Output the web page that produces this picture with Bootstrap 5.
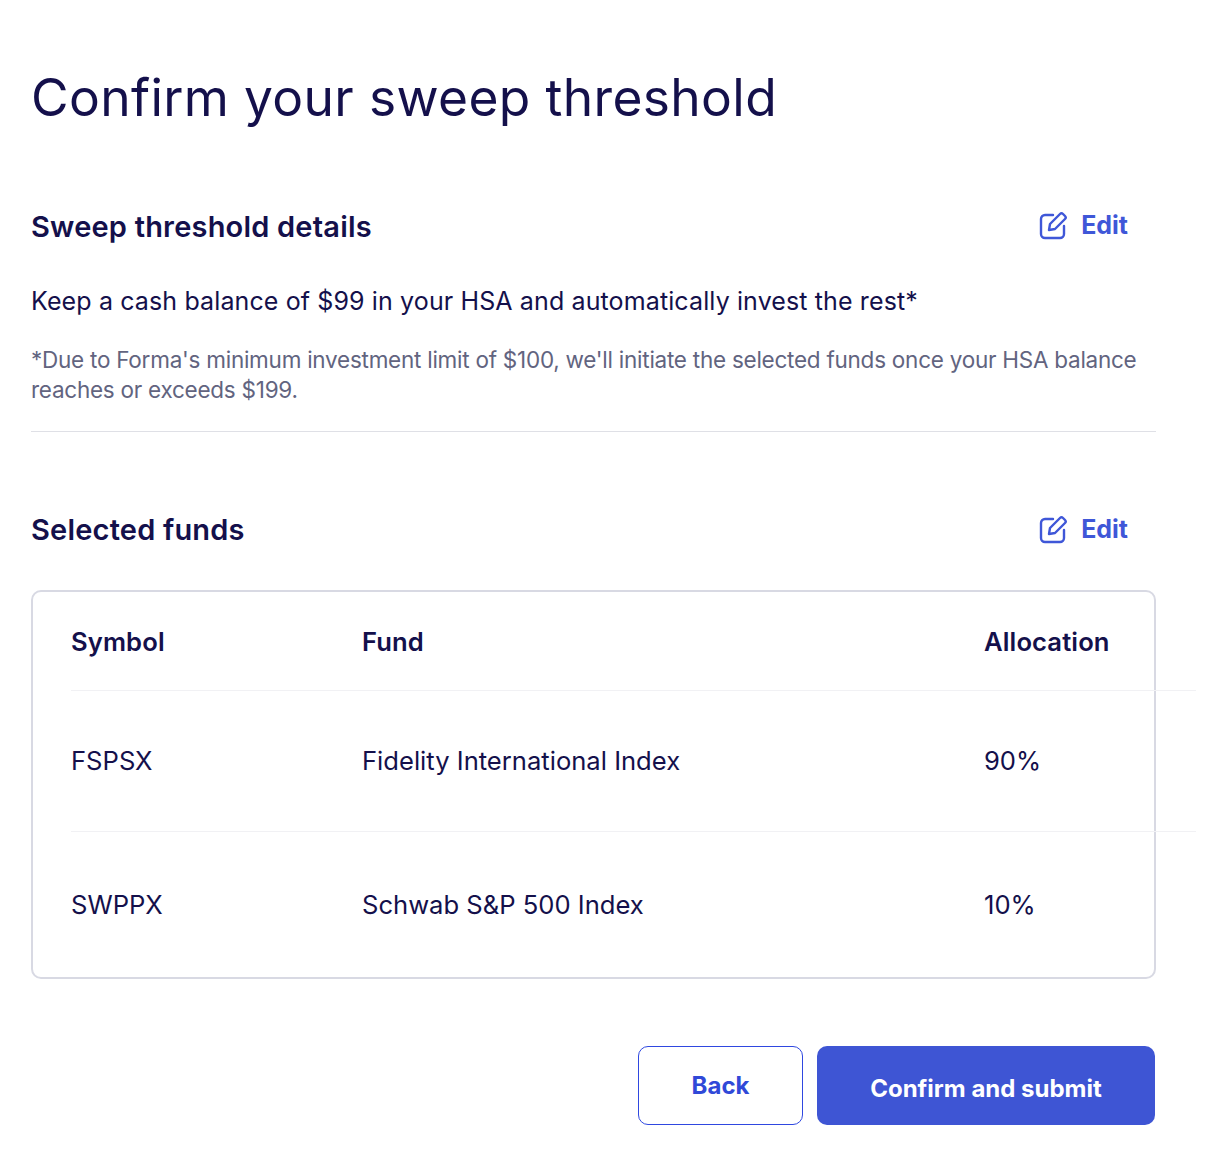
<!DOCTYPE html>
<html lang="en"><head><meta charset="utf-8">
<link href="https://cdn.jsdelivr.net/npm/bootstrap@5.3.0/dist/css/bootstrap.min.css" rel="stylesheet">
<style>
body{background:#fff;color:#14104b;font-family:Inter,"Liberation Sans",sans-serif;overflow-x:hidden}
.shell{width:1125px;margin-left:31px;padding-top:67px}
.title{font-size:51.5px;line-height:60px;font-weight:400;margin:0 0 81px;letter-spacing:.35px}
.sec-head{font-size:29px;line-height:34px;font-weight:600;margin:0;letter-spacing:.2px}
.edit-link{color:#3f57d8;font-weight:700;font-size:25px;text-decoration:none;margin:0 28px 2px 0;gap:13px;height:35.5px}
.lead-txt{font-size:25px;line-height:32px;margin:39px 0 28px;letter-spacing:.12px}
.note{font-size:22.5px;line-height:30px;color:#62647f;margin:0;padding-bottom:26px;border-bottom:1px solid #dfe0e6;letter-spacing:-.25px}
.fund-box{border:2px solid #d8d9e3;border-radius:10px;height:389px;padding:0 0 0 38px;margin-top:41px}
.fund-row{display:flex;align-items:center;font-size:25.6px;border-bottom:1px solid #f1f1f4;margin-right:-42px}
.fund-row.last{border-bottom:0}
.fund-head{letter-spacing:.12px;padding-top:2px;height:99px}
.row-a{height:141px}.row-b{height:146px}
.c1{width:291px}.c2{width:622px}
.btn-back{width:165px;height:79px;border:1.5px solid #2f48e0;color:#3049d8;border-radius:10px;background:#fff;font-weight:700;font-size:24px;padding-bottom:5px}
.btn-go{width:338px;height:79px;background:#3e55d4;color:#fff;border:0;border-radius:10px;font-weight:700;font-size:24px;padding-bottom:0}
.btn-row{margin-top:67px;gap:14px;margin-right:1px}
.second-head{margin-top:80px}
</style></head><body>
<div class="shell">
<h1 class="title">Confirm your sweep threshold</h1>
<div class="d-flex justify-content-between align-items-center"><h2 class="sec-head">Sweep threshold details</h2>
<a class="edit-link d-flex align-items-center" href="#"><svg width="29" height="29" viewBox="0 0 29 29" fill="none" stroke="#3f57d8" stroke-width="2.4" stroke-linecap="round" stroke-linejoin="round"><path d="M14 4H6a4 4 0 0 0-4 4v15a4 4 0 0 0 4 4h15a4 4 0 0 0 4-4v-8"/><path d="M10 19l1-6L21 3c1-1 2-1 3 0l2 2c1 1 1 2 0 3L16 18z"/></svg>Edit</a></div>
<p class="lead-txt">Keep a cash balance of $99 in your HSA and automatically invest the rest*</p>
<p class="note">*Due to Forma's minimum investment limit of $100, we'll initiate the selected funds once your HSA balance reaches or exceeds $199.</p>
<div class="d-flex justify-content-between align-items-center second-head"><h2 class="sec-head">Selected funds</h2>
<a class="edit-link d-flex align-items-center" href="#"><svg width="29" height="29" viewBox="0 0 29 29" fill="none" stroke="#3f57d8" stroke-width="2.4" stroke-linecap="round" stroke-linejoin="round"><path d="M14 4H6a4 4 0 0 0-4 4v15a4 4 0 0 0 4 4h15a4 4 0 0 0 4-4v-8"/><path d="M10 19l1-6L21 3c1-1 2-1 3 0l2 2c1 1 1 2 0 3L16 18z"/></svg>Edit</a></div>
<div class="fund-box">
<div class="fund-row fund-head fw-semibold"><div class="c1">Symbol</div><div class="c2">Fund</div><div>Allocation</div></div>
<div class="fund-row row-a"><div class="c1">FSPSX</div><div class="c2">Fidelity International Index</div><div>90%</div></div>
<div class="fund-row row-b last"><div class="c1">SWPPX</div><div class="c2">Schwab S&amp;P 500 Index</div><div>10%</div></div>
</div>
<div class="d-flex justify-content-end btn-row"><button class="btn btn-back">Back</button><button class="btn btn-go">Confirm and submit</button></div>
</div>
</body></html>
